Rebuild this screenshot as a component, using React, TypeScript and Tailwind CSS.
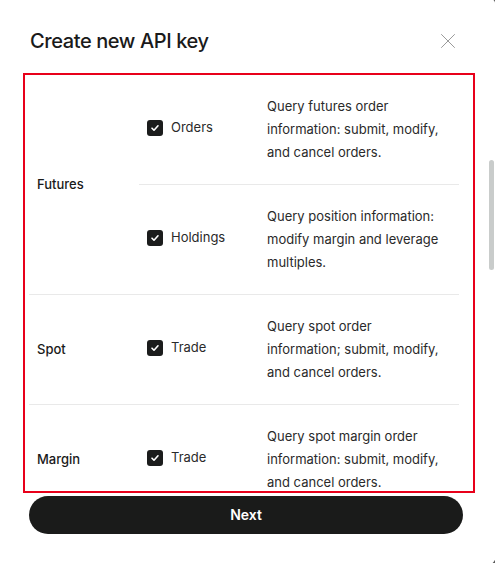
import React from 'react';

type Perm = { name: string; desc: string };
type Group = { label: string; perms: Perm[] };

const groups: Group[] = [
  {
    label: 'Futures',
    perms: [
      { name: 'Orders', desc: 'Query futures order information: submit, modify, and cancel orders.' },
      { name: 'Holdings', desc: 'Query position information: modify margin and leverage multiples.' },
    ],
  },
  {
    label: 'Spot',
    perms: [{ name: 'Trade', desc: 'Query spot order information; submit, modify, and cancel orders.' }],
  },
  {
    label: 'Margin',
    perms: [{ name: 'Trade', desc: 'Query spot margin order information: submit, modify, and cancel orders.' }],
  },
];

const CheckBox = () => (
  <span className="flex h-4 w-4 shrink-0 items-center justify-center rounded-[3px] bg-[#1b1c1c]">
    <svg width="10" height="10" viewBox="0 0 10 10" fill="none">
      <path d="M2 5.2l2 2 4-4.4" stroke="#fff" strokeWidth="1.6" strokeLinecap="round" strokeLinejoin="round" />
    </svg>
  </span>
);

const PermRow = ({ perm, first }: { perm: Perm; first: boolean }) => (
  <div className={'flex items-center py-5 pl-2 pr-2 ' + (first ? '' : 'border-t border-[#e9e9e9]')}>
    <label className="-mt-1 flex w-[120px] shrink-0 items-center gap-2">
      <CheckBox />
      <span className="text-[13px] text-[#2a2a2a]">{perm.name}</span>
    </label>
    <p className="w-[176px] text-[13px] leading-[23px] text-[#2a2a2a]">{perm.desc}</p>
  </div>
);

export default function App() {
  return (
    <div className="h-[563px] w-[495px] overflow-hidden bg-[#5a5a5a]" style={{ fontFamily: 'Inter, "Noto Sans", sans-serif' }}>
      <div className="relative -mt-[6px] flex h-[574px] w-[497px] flex-col rounded-tr-[16px] rounded-br-[16px] rounded-bl-[4px] bg-white pt-[6px]">
        <div className="flex items-center justify-between pl-[30px] pr-[41px] pt-[27px]">
          <h2 className="text-[20px] font-medium leading-7 tracking-[-0.4px] text-[#1a1a1a]">Create new API key</h2>
          <button className="text-[#9a9a9a]" aria-label="Close">
            <svg width="16" height="16" viewBox="0 0 16 16" fill="none">
              <path d="M1.5 1.5l13 13M14.5 1.5l-13 13" stroke="currentColor" strokeWidth="1" strokeLinecap="round" />
            </svg>
          </button>
        </div>

        <div className="ml-[23px] mt-[18px] h-[420px] w-[452px] overflow-hidden border-2 border-[#e8001a] pl-1">
          <div className="w-[430px]">
            {groups.map((g, gi) => (
              <div key={g.label} className={'flex ' + (gi === 0 ? '' : 'border-t border-[#e9e9e9]')}>
                <div className="flex w-[110px] shrink-0 items-center pl-2 text-[13px] font-medium text-[#1a1a1a]">
                  {g.label}
                </div>
                <div className="flex-1">
                  {g.perms.map((p, pi) => (
                    <PermRow key={p.name} perm={p} first={pi === 0} />
                  ))}
                </div>
              </div>
            ))}
          </div>
        </div>

        <button className="ml-[29px] mt-[3px] h-[38px] w-[434px] rounded-full bg-[#1a1b1a] pb-px text-[14px] font-semibold text-white">
          Next
        </button>

        <div className="absolute right-[3px] top-[166px] h-[110px] w-[5px] rounded-full bg-[#c9cccb]" />
      </div>
    </div>
  );
}
